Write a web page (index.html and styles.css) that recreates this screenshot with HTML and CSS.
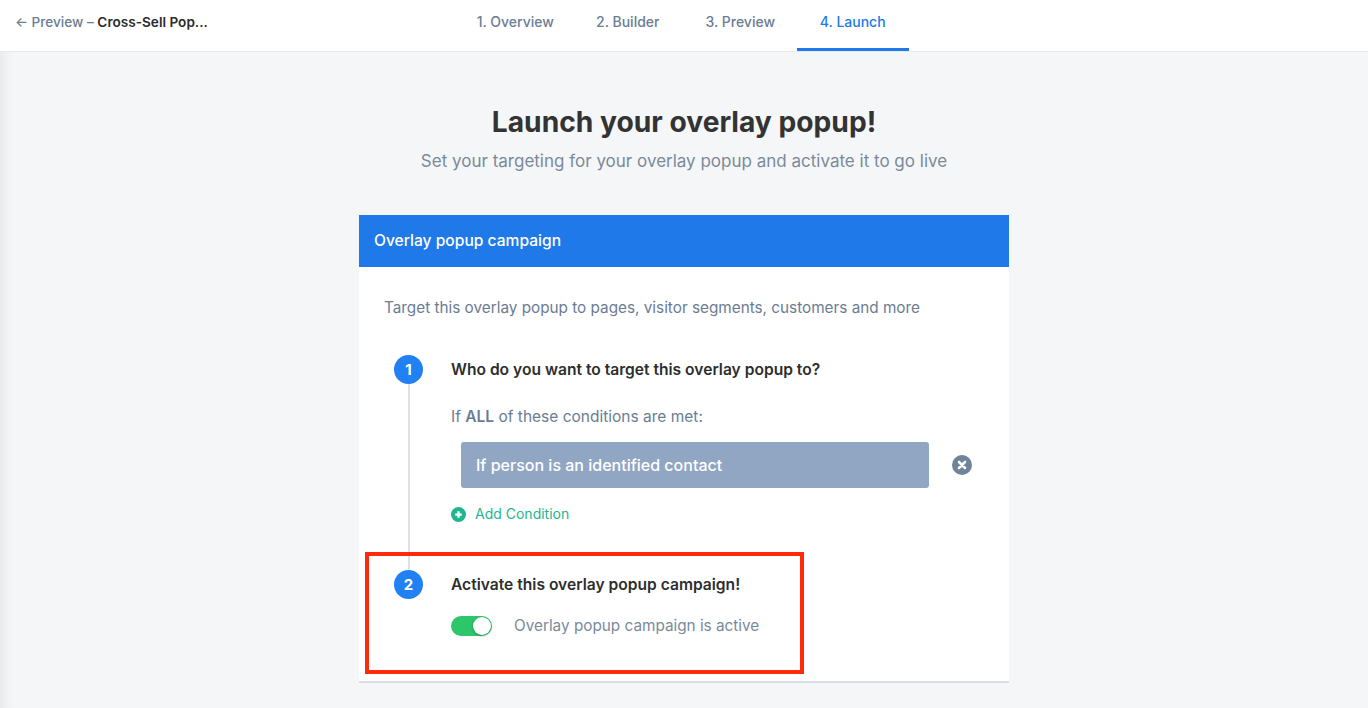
FILE: index.html
```html
<!DOCTYPE html>
<html lang="en">
  <head>
    <meta charset="UTF-8" />
    <meta name="viewport" content="width=device-width, initial-scale=1.0" />
    <title>Launch</title>
    <link rel="stylesheet" href="styles.css">
  </head>
  <body>
    <div class="topbar">
      <a href="javascript:;" class="back">&larr; Preview &ndash; <b>Cross-Sell Pop...</b></a>
      <ul class="tabs">
        <li>1. Overview</li>
        <li>2. Builder</li>
        <li>3. Preview</li>
        <li class="current">4. Launch</li>
      </ul>
    </div>

    <div class="main">
      <h1 class="title">Launch your overlay popup!</h1>
      <p class="sub">Set your targeting for your overlay popup and activate it to go live</p>

      <div class="card">
        <div class="card-head">Overlay popup campaign</div>
        <div class="card-body">
          <p class="intro">Target this overlay popup to pages, visitor segments, customers and more</p>

          <div class="step first">
            <div class="num">1</div>
            <div class="step-main">
              <h3>Who do you want to target this overlay popup to?</h3>
              <p class="rule">If <b>ALL</b> of these conditions are met:</p>
              <div class="cond-row">
                <div class="cond">If person is an identified contact</div>
                <span class="remove">
                  <svg width="20" height="20" viewBox="0 0 20 20">
                    <circle cx="10" cy="10" r="10" fill="#6f8399" />
                    <path d="M7 7l6 6M13 7l-6 6" stroke="#fff" stroke-width="2.6" stroke-linecap="round" />
                  </svg>
                </span>
              </div>
              <a href="javascript:;" class="add">
                <svg width="15" height="15" viewBox="0 0 16 16">
                  <circle cx="8" cy="8" r="8" fill="#1fb58f" />
                  <path d="M8 4.5v7M4.5 8h7" stroke="#fff" stroke-width="2.4" />
                </svg>
                Add Condition
              </a>
            </div>
          </div>

          <div class="step second">
            <div class="num">2</div>
            <div class="step-main">
              <h3>Activate this overlay popup campaign!</h3>
              <div class="active-row">
                <span class="toggle"><span class="knob"></span></span>
                <span class="active-txt">Overlay popup campaign is active</span>
              </div>
            </div>
          </div>

          <div class="mark"></div>
        </div>
      </div>
    </div>
  </body>
</html>
```

FILE: styles.css
```css
* {
  margin: 0;
  padding: 0;
  box-sizing: border-box;
}
body {
  background-color: #f5f6f8;
  font-family: Inter, "Liberation Sans", sans-serif;
  color: #333;
  box-shadow: inset 14px 0 14px -12px rgba(0, 0, 0, 0.08);
  min-height: 708px;
}
a {
  text-decoration: none;
}
.topbar {
  height: 52px;
  background: #fff;
  border-bottom: 1px solid #e6ebf1;
  position: relative;
  display: flex;
  justify-content: center;
}
.back {
  position: absolute;
  left: 15px;
  top: 14px;
  font-size: 13.6px;
  font-weight: 500;
  color: #6b7c93;
}
.back b {
  color: #2b2b2b;
  font-weight: 600;
}
.tabs {
  display: flex;
  list-style-type: none;
}
.tabs li {
  width: 112.5px;
  text-align: center;
  font-size: 14px;
  font-weight: 500;
  color: #6b7c93;
  line-height: 44px;
  height: 51px;
}
.tabs .current {
  color: #2079e8;
  border-bottom: 3px solid #2079e8;
}
.main {
  width: 650px;
  margin: 0 auto;
  padding-top: 53px;
}
.title {
  text-align: center;
  font-size: 28.2px;
  font-weight: 700;
  color: #333;
  line-height: 34px;
}
.sub {
  text-align: center;
  font-size: 17px;
  color: #7a8a9b;
  margin-top: 12px;
  line-height: 20px;
  white-space: nowrap;
  margin-left: -40px;
  margin-right: -40px;
}
.card {
  margin-top: 44px;
  background: #fff;
  border-bottom: 2px solid #d9dee5;
}
.card-head {
  height: 52px;
  background: #2079e8;
  color: #fff;
  font-size: 15.6px;
  font-weight: 500;
  line-height: 52px;
  padding-left: 15px;
}
.card-body {
  position: relative;
  padding: 31px 25px 45px;
}
.intro {
  font-size: 15.3px;
  color: #6b7c93;
  line-height: 20px;
}
.step {
  display: flex;
  margin-top: 44px;
  position: relative;
}
.step.first {
  margin-top: 37px;
}
.step.first::before {
  content: "";
  position: absolute;
  left: 24px;
  top: 14px;
  width: 2px;
  height: 214px;
  background: #dde2e8;
}
.num {
  width: 29px;
  height: 29px;
  border-radius: 50%;
  background: #2180f2;
  color: #fff;
  font-size: 15px;
  font-weight: 700;
  text-align: center;
  line-height: 29px;
  margin-left: 10px;
  position: relative;
  z-index: 1;
  flex-shrink: 0;
}
.step-main {
  margin-left: 28px;
  flex: 1;
}
.step-main h3 {
  font-size: 15.6px;
  font-weight: 600;
  color: #2d2d2d;
  line-height: 29px;
}
.rule {
  font-size: 15.5px;
  color: #6b7c93;
  margin-top: 23px;
  line-height: 20px;
}
.rule b {
  font-weight: 600;
}
.cond-row {
  display: flex;
  align-items: center;
  margin-top: 15px;
}
.cond {
  width: 468px;
  height: 46px;
  margin-left: 10px;
  background: #91a6c3;
  border-radius: 3px;
  color: #fff;
  font-size: 16px;
  font-weight: 500;
  line-height: 46px;
  padding-left: 15px;
}
.remove {
  display: flex;
  margin-left: 23px;
}
.add {
  display: inline-flex;
  align-items: center;
  gap: 9px;
  margin-top: 17px;
  color: #1fb58f;
  font-size: 14px;
  line-height: 18px;
}
.active-row {
  display: flex;
  align-items: center;
  margin-top: 17px;
}
.toggle {
  width: 41px;
  height: 20px;
  border-radius: 10px;
  background: #2ec66b;
  position: relative;
}
.knob {
  position: absolute;
  right: 1px;
  top: 1px;
  width: 18px;
  height: 18px;
  border-radius: 50%;
  background: #fff;
  box-shadow: 0 1px 3px rgba(0, 0, 0, 0.3);
}
.active-txt {
  margin-left: 22px;
  font-size: 15.3px;
  color: #7a8a9b;
}
.mark {
  position: absolute;
  left: 6px;
  top: 285px;
  width: 439px;
  height: 122px;
  border: 4px solid #fd2a0c;
}
```
